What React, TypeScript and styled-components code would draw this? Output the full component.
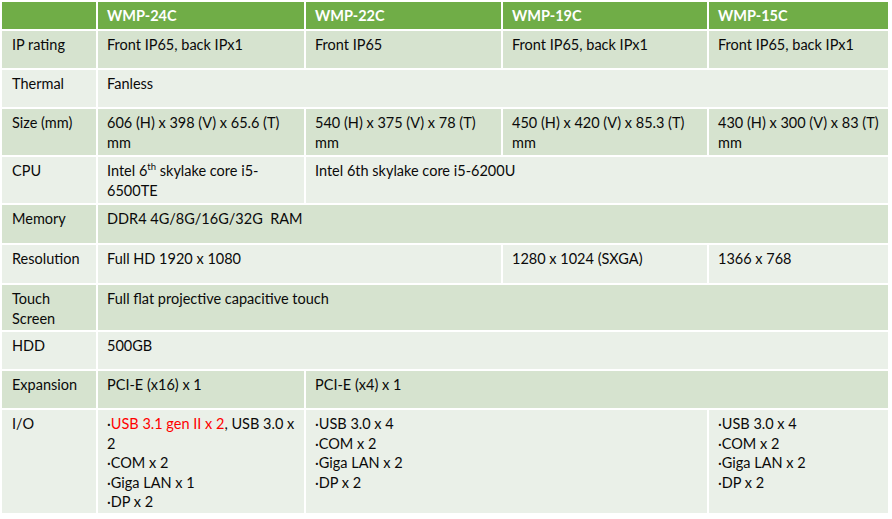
import React from "react";
import styled, { createGlobalStyle } from "styled-components";

const GlobalStyle = createGlobalStyle`
  html, body {
    margin: 0;
    padding: 0;
    background: #ffffff;
  }
  body {
    font-family: Lato, "Noto Sans", sans-serif;
    color: #0a0a0a;
  }
`;

const Table = styled.table`
  border-collapse: separate;
  border-spacing: 2px;
  table-layout: fixed;
  width: 890px;
  font-size: 14.5px;
  line-height: 19.5px;
`;

const HeadRow = styled.tr`
  height: 27px;
  background: #70ad47;
`;

const HeadCell = styled.th`
  padding: 0 9px;
  text-align: left;
  vertical-align: middle;
  color: #ffffff;
  font-weight: 700;
  font-size: 14.5px;
`;

const Row = styled.tr<{ $band: "dark" | "light"; $h: number }>`
  height: ${(p) => p.$h}px;
  background: ${(p) => (p.$band === "dark" ? "#d6e3cf" : "#eaf0e8")};
`;

const Label = styled.td`
  padding: 4px 4px 0 10px;
  vertical-align: top;
  font-weight: 400;
`;

const Cell = styled.td`
  padding: 4px 5px 0 9px;
  vertical-align: top;
`;

const Red = styled.span`
  color: #ff0000;
`;

const Sup = styled.span`
  display: inline-block;
  font-size: 9.5px;
  line-height: 9px;
  vertical-align: 6px;
`;

const List = styled.div`
  display: flex;
  flex-direction: column;
`;

const models = ["WMP-24C", "WMP-22C", "WMP-19C", "WMP-15C"];

export default function App() {
  return (
    <>
      <GlobalStyle />
      <Table>
        <colgroup>
          <col style={{ width: 94 }} />
          <col style={{ width: 206 }} />
          <col style={{ width: 195 }} />
          <col style={{ width: 204 }} />
          <col style={{ width: 179 }} />
        </colgroup>
        <thead>
          <HeadRow>
            <HeadCell />
            {models.map((m) => (
              <HeadCell key={m}>{m}</HeadCell>
            ))}
          </HeadRow>
        </thead>
        <tbody>
          <Row $band="dark" $h={37}>
            <Label>IP rating</Label>
            <Cell>Front IP65, back IPx1</Cell>
            <Cell>Front IP65</Cell>
            <Cell>Front IP65, back IPx1</Cell>
            <Cell>Front IP65, back IPx1</Cell>
          </Row>
          <Row $band="light" $h={37}>
            <Label>Thermal</Label>
            <Cell colSpan={4}>Fanless</Cell>
          </Row>
          <Row $band="dark" $h={46}>
            <Label>Size (mm)</Label>
            <Cell>606 (H) x 398 (V) x 65.6 (T) mm</Cell>
            <Cell>540 (H) x 375 (V) x 78 (T) mm</Cell>
            <Cell>450 (H) x 420 (V) x 85.3 (T) mm</Cell>
            <Cell>430 (H) x 300 (V) x 83 (T) mm</Cell>
          </Row>
          <Row $band="light" $h={46}>
            <Label>CPU</Label>
            <Cell>
              Intel 6<Sup>th</Sup> skylake core i5-6500TE
            </Cell>
            <Cell colSpan={3}>Intel 6th skylake core i5-6200U</Cell>
          </Row>
          <Row $band="dark" $h={38}>
            <Label>Memory</Label>
            <Cell colSpan={4}>DDR4 4G/8G/16G/32G&nbsp; RAM</Cell>
          </Row>
          <Row $band="light" $h={38}>
            <Label>Resolution</Label>
            <Cell colSpan={2}>Full HD 1920 x 1080</Cell>
            <Cell>1280 x 1024 (SXGA)</Cell>
            <Cell>1366 x 768</Cell>
          </Row>
          <Row $band="dark" $h={45}>
            <Label>Touch Screen</Label>
            <Cell colSpan={4}>Full flat projective capacitive touch</Cell>
          </Row>
          <Row $band="light" $h={37}>
            <Label>HDD</Label>
            <Cell colSpan={4}>500GB</Cell>
          </Row>
          <Row $band="dark" $h={37}>
            <Label>Expansion</Label>
            <Cell>PCI-E (x16) x 1</Cell>
            <Cell colSpan={3}>PCI-E (x4) x 1</Cell>
          </Row>
          <Row $band="light" $h={103}>
            <Label>I/O</Label>
            <Cell>
              <List>
                <span>
                  ·<Red>USB 3.1 gen II x 2</Red>, USB 3.0 x 2
                </span>
                <span>·COM x 2</span>
                <span>·Giga LAN x 1</span>
                <span>·DP x 2</span>
              </List>
            </Cell>
            <Cell colSpan={2}>
              <List>
                <span>·USB 3.0 x 4</span>
                <span>·COM x 2</span>
                <span>·Giga LAN x 2</span>
                <span>·DP x 2</span>
              </List>
            </Cell>
            <Cell>
              <List>
                <span>·USB 3.0 x 4</span>
                <span>·COM x 2</span>
                <span>·Giga LAN x 2</span>
                <span>·DP x 2</span>
              </List>
            </Cell>
          </Row>
        </tbody>
      </Table>
    </>
  );
}
